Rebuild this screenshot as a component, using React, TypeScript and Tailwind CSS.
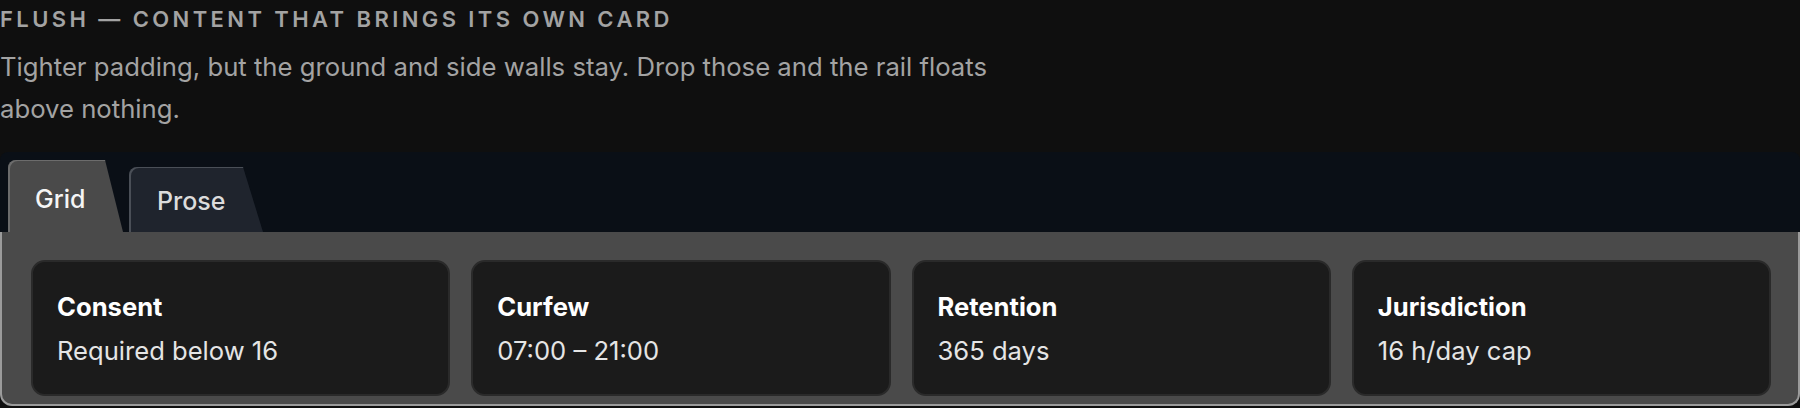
const facts = [
  { label: 'Consent', value: 'Required below 16' },
  { label: 'Curfew', value: '07:00 – 21:00' },
  { label: 'Retention', value: '365 days' },
  { label: 'Jurisdiction', value: '16 h/day cap' },
];

function FactCard({ label, value }: { label: string; value: string }) {
  return (
    <div className="rounded-[14px] border-2 border-[#2a2a2a] bg-[#1b1b1b] px-[24px] pt-[27px] pb-[25px]">
      <div className="text-[25.6px] leading-[36px] font-bold text-white">{label}</div>
      <div className="mt-[8px] text-[25.6px] leading-[36px] text-[#e5e5e5]">{value}</div>
    </div>
  );
}

export default function App() {
  return (
    <main className="w-[1800px] h-[408px] overflow-hidden bg-[#0f0f0f] font-['Inter',sans-serif]">
      <h2 className="text-[22px] leading-[38px] font-semibold uppercase tracking-[0.155em] text-[#a3a3a3]">
        Flush — content that brings its own card
      </h2>
      <p className="mt-[8px] max-w-[1040px] text-[25.7px] leading-[42px] text-[#a3a3a3]">
        Tighter padding, but the ground and side walls stay. Drop those and the rail floats above nothing.
      </p>

      <section className="mt-[22px]">
        {/* tab rail */}
        <div className="flex h-[80px] items-end gap-[6px] rounded-t-[8px] bg-[#0a0f16] pl-[8px]">
          <div className="h-[72px] w-[115px] rounded-tl-[8px] bg-[#4a4a4a] pl-[27px] pt-[21px] shadow-[inset_2px_1px_0_#6c6c6c] [clip-path:polygon(0_0,97px_0,100%_100%,0_100%)]">
            <span className="text-[25px] leading-[36px] font-medium text-[#f5f5f5]">Grid</span>
          </div>
          <div className="h-[65px] w-[134px] rounded-tl-[8px] bg-[#1f242d] pl-[28px] pt-[16px] shadow-[inset_2px_1px_0_#4a4f57] [clip-path:polygon(0_0,114px_0,100%_100%,0_100%)]">
            <span className="text-[25px] leading-[36px] font-medium text-[#dcdcdc]">Prose</span>
          </div>
        </div>

        {/* ground */}
        <div className="grid grid-cols-4 gap-[21px] rounded-b-[12px] border-x-2 border-b-2 border-[#9b9b9b] bg-[#4a4a4a] pl-[29px] pr-[27px] pt-[28px] pb-[8px]">
          {facts.map((f) => (
            <FactCard key={f.label} label={f.label} value={f.value} />
          ))}
        </div>
      </section>
    </main>
  );
}
